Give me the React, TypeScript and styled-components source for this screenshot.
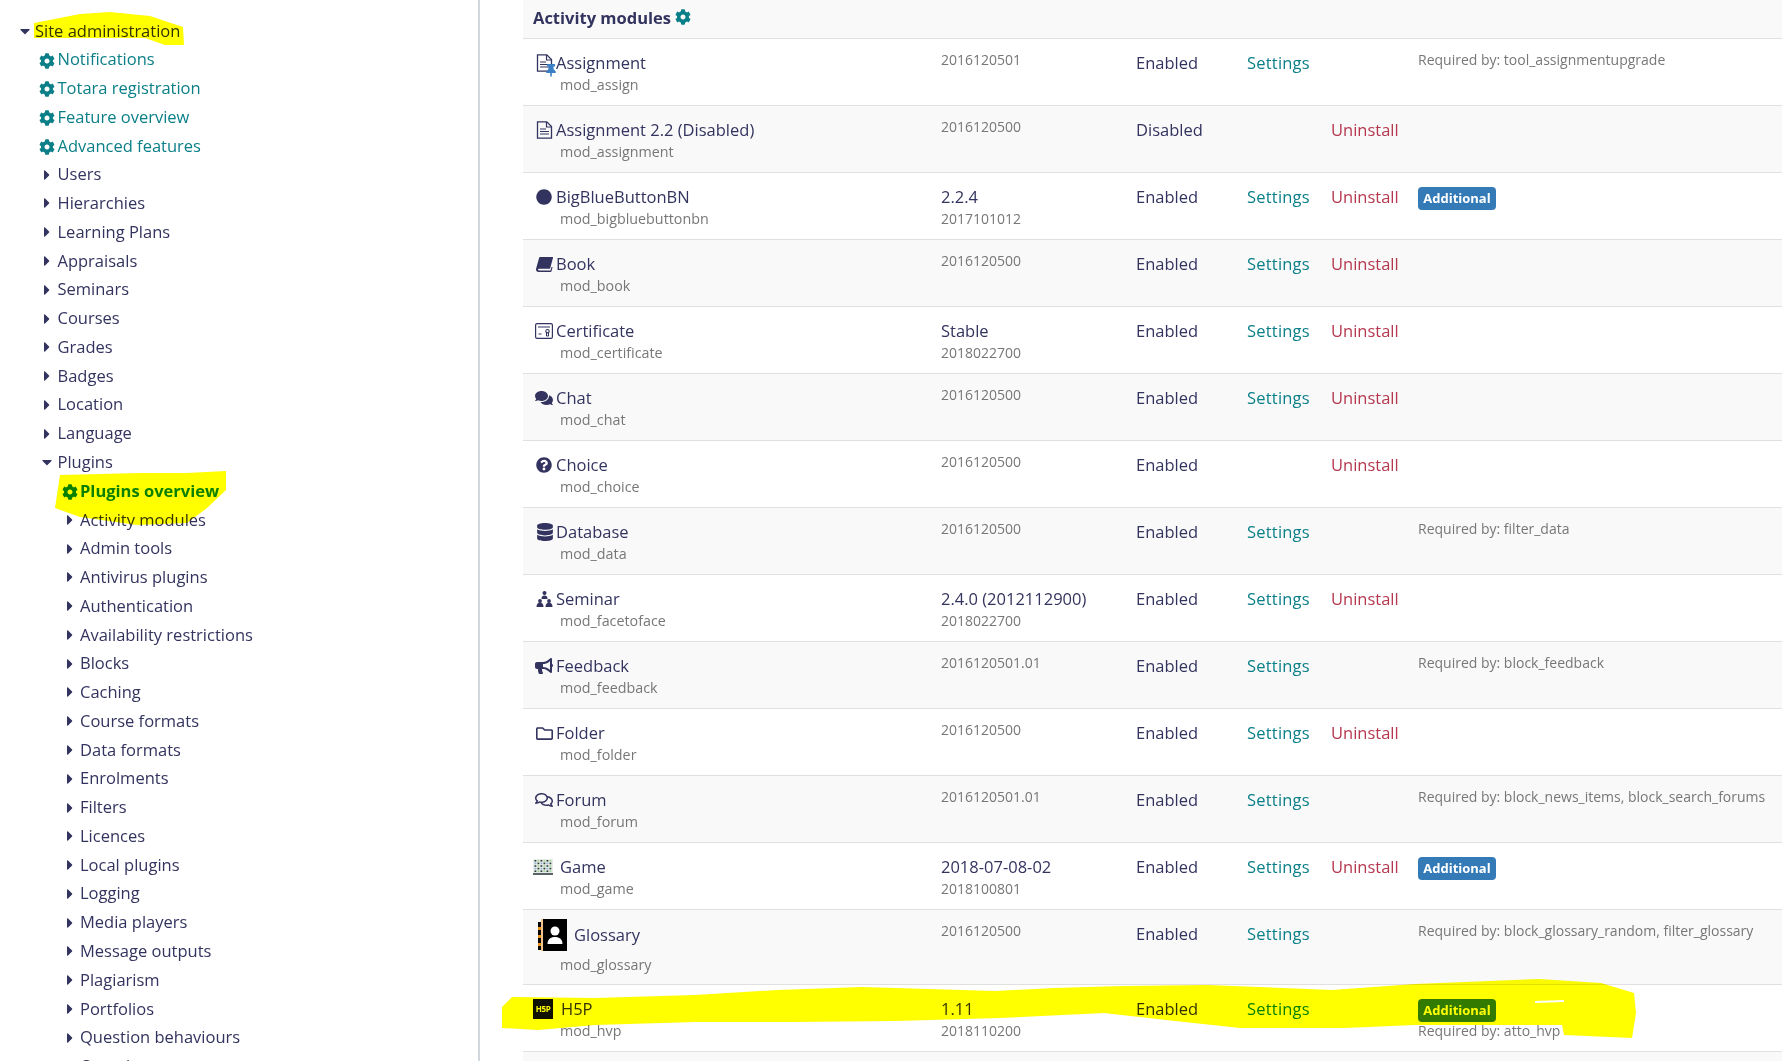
/**
 * Site administration: plugins overview (activity modules)
 */
import { FC, ReactNode } from 'react';
import styled, { createGlobalStyle } from 'styled-components';
import {
  FaBullhorn,
  FaCaretDown,
  FaCaretRight,
  FaCircle,
  FaCog,
  FaComments,
  FaDatabase,
  FaQuestionCircle,
  FaRegComments,
  FaRegFolder,
  FaThumbtack
} from 'react-icons/fa';

const NAVY = '#33335f';
const TEAL = '#0a7f87';
const GREY = '#777777';

const GlobalStyle = createGlobalStyle`
  html, body {
    margin: 0;
    padding: 0;
    background: #ffffff;
  }
  body {
    font-family: 'Open Sans', 'Liberation Sans', sans-serif;
    font-size: 16.5px;
    color: ${NAVY};
  }
`;

const Page = styled.div`
  position: relative;
  isolation: isolate;
  width: 100%;
  height: 100vh;
  overflow: hidden;
  display: flex;
  background: #ffffff;
`;

// 左側
const Sidebar = styled.nav`
  flex: 0 0 478px;
  box-sizing: content-box;
  border-right: 2px solid #d3d8de;
  padding-top: 16.5px;
`;

const TreeList = styled.ul`
  list-style: none;
  margin: 0;
  padding: 0;
`;

const TreeRow = styled.li<{ $level: number }>`
  height: 28.78px;
  display: flex;
  align-items: center;
  padding-left: ${props => 16 + props.$level * 22.5}px;
  line-height: 28.78px;
`;

const TreeIcon = styled.span`
  flex: 0 0 17px;
  width: 17px;
  margin-right: 2px;
  display: flex;
  justify-content: center;
  align-items: center;
`;

const TreeLabel = styled.span<{ $tone?: 'link' | 'current' }>`
  color: ${props => (props.$tone ? TEAL : NAVY)};
  white-space: nowrap;
  font-weight: ${props => (props.$tone === 'current' ? 700 : 400)};
`;

const GearIcon = styled(FaCog)`
  width: 16px;
  height: 16px;
  color: ${TEAL};
  margin-top: 2px;
`;

// 右側
const Main = styled.main`
  flex: 1;
  min-width: 0;
  padding-left: 43px;
`;

const PluginTable = styled.table`
  width: 100%;
  table-layout: fixed;
  border-collapse: collapse;
`;

const HeaderCell = styled.th`
  height: 34px;
  padding: 0 0 4px 10px;
  background: #f9f9f9;
  text-align: left;
  font-weight: 700;
  font-size: 16.5px;
  color: ${NAVY};
`;

const HeaderInner = styled.span`
  display: inline-flex;
  align-items: center;
  gap: 4px;
`;

const Row = styled.tr<{ $odd: boolean; $tall?: boolean }>`
  height: ${props => (props.$tall ? 75 : 67)}px;
  background: ${props => (props.$odd ? '#ffffff' : '#f9f9f9')};
  border-top: 1px solid #e0e0e0;
`;

const Cell = styled.td`
  vertical-align: top;
  padding: 12px 0 0 0;
  line-height: 24px;
  white-space: nowrap;
`;

const NameCell = styled(Cell)`
  padding-left: 12px;
`;

const NameLine = styled.div<{ $tall?: boolean }>`
  display: flex;
  align-items: center;
  height: ${props => (props.$tall ? 32 : 24)}px;
  ${props => props.$tall && 'margin-top: -3px; margin-bottom: 4px;'}
`;

const IconSlot = styled.span<{ $width: number }>`
  position: relative;
  flex: 0 0 ${props => props.$width}px;
  width: ${props => props.$width}px;
  height: 100%;
  display: flex;
  align-items: center;
  color: ${NAVY};
`;

const PinBadge = styled(FaThumbtack)`
  position: absolute;
  left: 11px;
  top: 13px;
  width: 10px;
  height: 13px;
  color: #3a7fc4;
`;

const Sub = styled.div`
  padding-left: 25px;
  font-size: 14.3px;
  line-height: 20px;
  color: ${GREY};
`;

const Release = styled.div`
  line-height: 24px;
`;

const Small = styled.div<{ $follow?: boolean }>`
  font-size: 14px;
  line-height: ${props => (props.$follow ? 20 : 18)}px;
  color: ${GREY};
`;

const SettingsLink = styled.a`
  color: ${TEAL};
  letter-spacing: 0.2px;
`;

const UninstallLink = styled.a`
  color: #b5384f;
`;

const Badge = styled.span`
  display: block;
  width: 78px;
  height: 23px;
  margin-top: 2px;
  border-radius: 4px;
  background: #337ab7;
  color: #ffffff;
  font-size: 13px;
  font-weight: 700;
  line-height: 22px;
  text-align: center;
`;

const BadgeNote = styled(Small)`
  margin-top: -1px;
  line-height: 20px;
`;

const H5pMark = styled.span`
  width: 20px;
  height: 20px;
  margin-left: -2px;
  background: #111111;
  color: #ffffff;
  font-size: 8px;
  font-weight: 700;
  letter-spacing: -0.4px;
  line-height: 20px;
  text-align: center;
`;

// 蛍光ペンの跡
const Highlighter = styled.svg`
  position: absolute;
  left: 0;
  top: 0;
  pointer-events: none;
  mix-blend-mode: multiply;
`;

const FileIcon: FC = () => (
  <svg width="17" height="18" viewBox="0 0 17 18" style={{ marginLeft: 1 }}>
    <path d="M1.500.8h9.300l4.700 4.700v11.700h-14z" fill="none" stroke={NAVY} strokeWidth="1.300" />
    <path d="M10.500 1v5h5" fill="none" stroke={NAVY} strokeWidth="1.200" />
    <path d="M4 8h6M4 10.500h9M4 13h9" stroke={NAVY} strokeWidth="1.200" />
  </svg>
);

const BookIcon: FC = () => (
  <svg width="17" height="15" viewBox="0 0 17 15" style={{ marginLeft: 1 }}>
    <path d="M4 0h12.500c.4 0 .6.300.5.700l-2.800 10.500c-.1.400-.4.600-.8.600H3c-.6 0-1 .3-1 .8s.4.800 1 .8h11.600l.9-3.400h1.100L15.500 14.300c-.1.400-.4.700-.9.700H2.500C1 15 0 14 0 12.500c0-.4.100-.8.200-1.200L3.200.6C3.300.2 3.600 0 4 0z" fill={NAVY} />
  </svg>
);

const CertificateIcon: FC = () => (
  <svg width="18" height="16" viewBox="0 0 18 16">
    <rect x="0.6" y="0.6" width="16.8" height="14.8" rx="1.5" fill="none" stroke={NAVY} strokeWidth="1.2" />
    <path d="M3 4h12M3.500 11h3" stroke={NAVY} strokeWidth="1.2" />
    <circle cx="12.500" cy="8.200" r="1.700" fill="none" stroke={NAVY} strokeWidth="1.100" />
    <path d="M11.500 10v3h2v-3" fill="none" stroke={NAVY} strokeWidth="1" />
  </svg>
);

const SeminarIcon: FC = () => (
  <svg width="17" height="16" viewBox="0 0 17 16" style={{ marginLeft: 1 }}>
    <g fill={NAVY}>
      <circle cx="8.500" cy="2" r="2" />
      <path d="M5.500 8c0-2.400 1.200-3.400 3-3.400s3 1 3 3.400z" />
      <circle cx="4" cy="10" r="1.900" />
      <path d="M.5 16c0-2.800 1.400-4.400 3.500-4.400s3.500 1.600 3.500 4.400z" />
      <circle cx="13" cy="10" r="1.900" />
      <path d="M9.500 16c0-2.800 1.400-4.400 3.500-4.400s3.500 1.600 3.500 4.400z" />
    </g>
  </svg>
);

const GameIcon: FC = () => {
  const squares = [];
  for (let r = 0; r < 5; r++) {
    for (let c = 0; c < 6; c++) {
      const fill = (r + c) % 2 === 0 ? '#2c3a3c' : r % 2 === 0 ? '#9bd28f' : '#8fb7d8';
      squares.push(<rect key={`${r}-${c}`} x={1.5 + c * 3} y={1 + r * 2.6} width="1.800" height="1.600" fill={fill} />);
    }
  }
  return (
    <svg width="20" height="16" viewBox="0 0 20 16" style={{ marginLeft: -2 }}>
      <rect width="20" height="16" fill="#e8ece8" />
      {squares}
      <rect y="14" width="20" height="2" fill="#5a6468" />
    </svg>
  );
};

const GlossaryIcon: FC = () => (
  <svg width="29" height="32" viewBox="0 0 29 32" style={{ marginLeft: 3 }}>
    <rect x="5" width="24" height="32" fill="#000000" />
    <path d="M0 3h3v5H0zM0 11h3v5H0zM0 19h3v5H0zM0 27h3v4H0z" fill="#000000" />
    <path d="M0 8h3v3H0zM0 16h3v3H0zM0 24h3v3H0z" fill="#e8901c" />
    <path d="M3.500 0h1v32h-1z" fill="#e8901c" />
    <circle cx="17" cy="12" r="4.500" fill="#ffffff" />
    <path d="M9.500 25c0-4.500 3-7 7.500-7s7.500 2.500 7.500 7z" fill="#ffffff" />
  </svg>
);

type Plugin = {
  name: string;
  mod: string;
  icon: ReactNode;
  slot?: number;
  release?: string;
  version: string;
  status: string;
  settings?: boolean;
  uninstall?: boolean;
  additional?: boolean;
  note?: string;
  tall?: boolean;
};

const plugins: Plugin[] = [
  {
    name: 'Assignment',
    mod: 'mod_assign',
    icon: (
      <>
        <FileIcon />
        <PinBadge />
      </>
    ),
    version: '2016120501',
    status: 'Enabled',
    settings: true,
    note: 'Required by: tool_assignmentupgrade'
  },
  {
    name: 'Assignment 2.2 (Disabled)',
    mod: 'mod_assignment',
    icon: <FileIcon />,
    version: '2016120500',
    status: 'Disabled',
    uninstall: true
  },
  {
    name: 'BigBlueButtonBN',
    mod: 'mod_bigbluebuttonbn',
    icon: <FaCircle size={16} style={{ marginLeft: 1 }} />,
    release: '2.2.4',
    version: '2017101012',
    status: 'Enabled',
    settings: true,
    uninstall: true,
    additional: true
  },
  {
    name: 'Book',
    mod: 'mod_book',
    icon: <BookIcon />,
    version: '2016120500',
    status: 'Enabled',
    settings: true,
    uninstall: true
  },
  {
    name: 'Certificate',
    mod: 'mod_certificate',
    icon: <CertificateIcon />,
    release: 'Stable',
    version: '2018022700',
    status: 'Enabled',
    settings: true,
    uninstall: true
  },
  {
    name: 'Chat',
    mod: 'mod_chat',
    icon: <FaComments size={18} />,
    version: '2016120500',
    status: 'Enabled',
    settings: true,
    uninstall: true
  },
  {
    name: 'Choice',
    mod: 'mod_choice',
    icon: <FaQuestionCircle size={16} style={{ marginLeft: 1 }} />,
    version: '2016120500',
    status: 'Enabled',
    uninstall: true
  },
  {
    name: 'Database',
    mod: 'mod_data',
    icon: <FaDatabase size={18} style={{ marginLeft: 1 }} />,
    version: '2016120500',
    status: 'Enabled',
    settings: true,
    note: 'Required by: filter_data'
  },
  {
    name: 'Seminar',
    mod: 'mod_facetoface',
    icon: <SeminarIcon />,
    release: '2.4.0 (2012112900)',
    version: '2018022700',
    status: 'Enabled',
    settings: true,
    uninstall: true
  },
  {
    name: 'Feedback',
    mod: 'mod_feedback',
    icon: <FaBullhorn size={18} />,
    version: '2016120501.01',
    status: 'Enabled',
    settings: true,
    note: 'Required by: block_feedback'
  },
  {
    name: 'Folder',
    mod: 'mod_folder',
    icon: <FaRegFolder size={17} style={{ marginLeft: 1 }} />,
    version: '2016120500',
    status: 'Enabled',
    settings: true,
    uninstall: true
  },
  {
    name: 'Forum',
    mod: 'mod_forum',
    icon: <FaRegComments size={18} />,
    version: '2016120501.01',
    status: 'Enabled',
    settings: true,
    note: 'Required by: block_news_items, block_search_forums'
  },
  {
    name: 'Game',
    mod: 'mod_game',
    icon: <GameIcon />,
    slot: 25,
    release: '2018-07-08-02',
    version: '2018100801',
    status: 'Enabled',
    settings: true,
    uninstall: true,
    additional: true
  },
  {
    name: 'Glossary',
    mod: 'mod_glossary',
    icon: <GlossaryIcon />,
    slot: 39,
    version: '2016120500',
    status: 'Enabled',
    settings: true,
    note: 'Required by: block_glossary_random, filter_glossary',
    tall: true
  },
  {
    name: 'H5P',
    mod: 'mod_hvp',
    icon: <H5pMark>H5P</H5pMark>,
    slot: 26,
    release: '1.11',
    version: '2018110200',
    status: 'Enabled',
    settings: true,
    additional: true,
    note: 'Required by: atto_hvp'
  }
];

const topLinks = ['Notifications', 'Totara registration', 'Feature overview', 'Advanced features'];
const topFolders = [
  'Users',
  'Hierarchies',
  'Learning Plans',
  'Appraisals',
  'Seminars',
  'Courses',
  'Grades',
  'Badges',
  'Location',
  'Language'
];
const pluginFolders = [
  'Activity modules',
  'Admin tools',
  'Antivirus plugins',
  'Authentication',
  'Availability restrictions',
  'Blocks',
  'Caching',
  'Course formats',
  'Data formats',
  'Enrolments',
  'Filters',
  'Licences',
  'Local plugins',
  'Logging',
  'Media players',
  'Message outputs',
  'Plagiarism',
  'Portfolios',
  'Question behaviours',
  'Question types'
];

const Folder: FC<{ label: string; level: number; open?: boolean }> = ({ label, level, open }) => (
  <TreeRow $level={level}>
    <TreeIcon>{open ? <FaCaretDown size={16} /> : <FaCaretRight size={16} />}</TreeIcon>
    <TreeLabel>{label}</TreeLabel>
  </TreeRow>
);

const App: FC = () => {
  return (
    <Page>
      <GlobalStyle />
      <Sidebar>
        <TreeList>
          <TreeRow $level={0}>
            <TreeIcon>
              <FaCaretDown size={16} />
            </TreeIcon>
            <TreeLabel>Site administration</TreeLabel>
          </TreeRow>
          {topLinks.map(link => (
            <TreeRow $level={1} key={link}>
              <TreeIcon>
                <GearIcon />
              </TreeIcon>
              <TreeLabel $tone="link">{link}</TreeLabel>
            </TreeRow>
          ))}
          {topFolders.map(folder => (
            <Folder label={folder} level={1} key={folder} />
          ))}
          <Folder label="Plugins" level={1} open />
          <TreeRow $level={2}>
            <TreeIcon>
              <GearIcon />
            </TreeIcon>
            <TreeLabel $tone="current">Plugins overview</TreeLabel>
          </TreeRow>
          {pluginFolders.map(folder => (
            <Folder label={folder} level={2} key={folder} />
          ))}
        </TreeList>
      </Sidebar>
      <Main>
        <PluginTable>
          <colgroup>
            <col style={{ width: 418 }} />
            <col style={{ width: 195 }} />
            <col style={{ width: 111 }} />
            <col style={{ width: 84 }} />
            <col style={{ width: 87 }} />
            <col />
          </colgroup>
          <thead>
            <tr>
              <HeaderCell colSpan={6}>
                <HeaderInner>
                  Activity modules
                  <GearIcon style={{ marginTop: 0 }} />
                </HeaderInner>
              </HeaderCell>
            </tr>
          </thead>
          <tbody>
            {plugins.map((plugin, key) => (
              <Row $odd={key % 2 === 0} $tall={plugin.tall} key={plugin.mod}>
                <NameCell>
                  <NameLine $tall={plugin.tall}>
                    <IconSlot $width={plugin.slot || 21}>{plugin.icon}</IconSlot>
                    {plugin.name}
                  </NameLine>
                  <Sub>{plugin.mod}</Sub>
                </NameCell>
                <Cell>
                  {plugin.release && <Release>{plugin.release}</Release>}
                  <Small $follow={!!plugin.release}>{plugin.version}</Small>
                </Cell>
                <Cell>{plugin.status}</Cell>
                <Cell>{plugin.settings && <SettingsLink>Settings</SettingsLink>}</Cell>
                <Cell>{plugin.uninstall && <UninstallLink>Uninstall</UninstallLink>}</Cell>
                <Cell>
                  {plugin.additional && <Badge>Additional</Badge>}
                  {plugin.note &&
                    (plugin.additional ? <BadgeNote>{plugin.note}</BadgeNote> : <Small>{plugin.note}</Small>)}
                </Cell>
              </Row>
            ))}
            <Row $odd={false}>
              <td colSpan={6} />
            </Row>
          </tbody>
        </PluginTable>
      </Main>
      <Highlighter width="1782" height="1061" viewBox="0 0 1782 1061">
        <g fill="#ffff00" fillRule="evenodd">
          <path d="M34 23L80 14L110 12L150 16L183 27L184 45L165 45L145 38L34 38Z" />
          <path d="M60 475L140 473L187 473L226 471L226 490L207 508L187 523L137 525L80 517L55 508Z" />
          <path d="M502 1007L512 997L595 998L695 995L778 990L862 987L995 991L1054 988L1124 986L1207 985L1332 990L1415 984L1539 979L1601 983L1634 993L1636 1013L1632 1038L1564 1035L1562 1025L1415 1025L1344 1028L1240 1028L1166 1020L1104 1013L1000 1018L895 1021L795 1022L695 1022L595 1025L538 1030L502 1028Z M1535 1001L1564 1000L1564 1002L1535 1003Z" />
        </g>
      </Highlighter>
    </Page>
  );
};

export default App;
